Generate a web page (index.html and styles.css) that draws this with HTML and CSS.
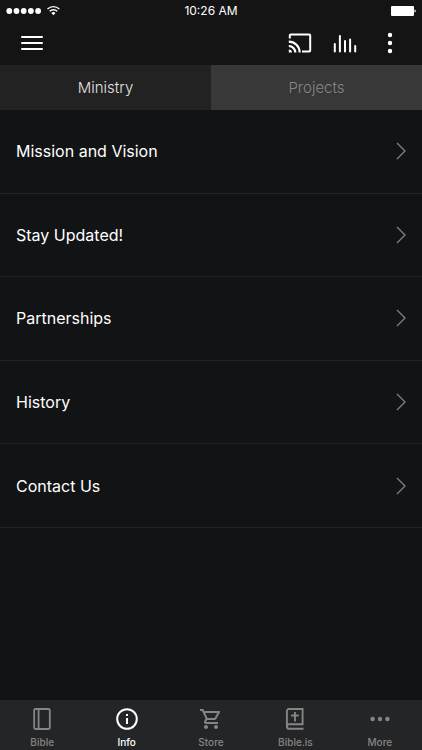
FILE: index.html
```html
<!DOCTYPE html>
<html lang="en">

<head>
    <title>Ministry</title>
    <meta charset="utf-8" />
    <meta name="viewport" content="width=device-width, initial-scale=1" />
    <link rel="stylesheet" href="styles.css">
</head>

<body>
    <!-- status bar -->
    <div class="status">
        <svg class="signal" width="54" height="12" viewBox="0 0 54 12" aria-hidden="true">
            <g fill="#fff">
                <circle cx="3.3" cy="6" r="2.9" />
                <circle cx="10.5" cy="6" r="2.9" />
                <circle cx="17.7" cy="6" r="2.9" />
                <circle cx="24.9" cy="6" r="2.9" />
                <circle cx="32.1" cy="6" r="2.9" />
                <path d="M47.4 10.2L45.3 8a3.1 3.1 0 0 1 4.2 0z" />
            </g>
            <g fill="none" stroke="#fff" stroke-width="1.4">
                <path d="M41.5 4a8.6 8.6 0 0 1 11.8 0" />
                <path d="M43.6 6.2a5.5 5.5 0 0 1 7.6 0" />
            </g>
        </svg>
        <span class="time">10:26 AM</span>
        <svg class="battery" width="26" height="12" viewBox="0 0 26 12" aria-hidden="true">
            <rect x="1" y="1" width="23" height="10" rx="1" fill="#fff" />
            <path d="M24.5 4.5q1.3.3 1.3 1.5t-1.3 1.5z" fill="#fff" />
        </svg>
    </div>

    <!-- toolbar -->
    <header class="toolbar">
        <button class="icon-btn menu-btn" type="button" aria-label="Menu">
            <svg width="24" height="24" viewBox="0 0 24 24" stroke="#fff" stroke-width="2" stroke-linecap="round">
                <path d="M2 6h20M2 12h20M2 18h20" />
            </svg>
        </button>
        <button class="icon-btn" type="button" aria-label="Cast">
            <svg width="24" height="24" viewBox="0 0 24 24" fill="#fff">
                <path d="M21.2 2.5H2.8c-1.1 0-2 .9-2 2v3h2v-3h18.4v15H14v2h7.2c1.1 0 2-.9 2-2v-15c0-1.1-.9-2-2-2z" />
                <path d="M.8 18.4v3.1H4a3.2 3.2 0 0 0-3.2-3.1zM.8 14v2.1a5.4 5.4 0 0 1 5.4 5.4h2.2A7.5 7.5 0 0 0 .8 14zM.8 9.6v2.1a9.8 9.8 0 0 1 9.8 9.8h2.1A11.9 11.9 0 0 0 .8 9.6z" />
            </svg>
        </button>
        <button class="icon-btn" type="button" aria-label="Now playing">
            <svg width="24" height="24" viewBox="0 0 24 24" stroke="#fff" stroke-width="2" stroke-linecap="round">
                <path d="M1.8 13v7.5M6.9 5v15.5M12 10v10.5M17.1 8.5v12M22.2 15v5.5" />
            </svg>
        </button>
        <button class="icon-btn" type="button" aria-label="Options">
            <svg width="24" height="24" viewBox="0 0 24 24" fill="#fff">
                <circle cx="12" cy="4" r="2.2" />
                <circle cx="12" cy="12" r="2.2" />
                <circle cx="12" cy="20" r="2.2" />
            </svg>
        </button>
    </header>

    <!-- tabs -->
    <div class="tabs">
        <button class="tab active" type="button">Ministry</button>
        <button class="tab" type="button">Projects</button>
    </div>

    <!-- list -->
    <main class="content">
        <ul class="list">
            <li><a class="row" href="#">Mission and Vision
                <svg class="chevron" width="10" height="18" viewBox="0 0 10 18"><path d="M1 1l8 8-8 8" /></svg></a></li>
            <li><a class="row" href="#">Stay Updated!
                <svg class="chevron" width="10" height="18" viewBox="0 0 10 18"><path d="M1 1l8 8-8 8" /></svg></a></li>
            <li><a class="row" href="#">Partnerships
                <svg class="chevron" width="10" height="18" viewBox="0 0 10 18"><path d="M1 1l8 8-8 8" /></svg></a></li>
            <li><a class="row" href="#">History
                <svg class="chevron" width="10" height="18" viewBox="0 0 10 18"><path d="M1 1l8 8-8 8" /></svg></a></li>
            <li><a class="row" href="#">Contact Us
                <svg class="chevron" width="10" height="18" viewBox="0 0 10 18"><path d="M1 1l8 8-8 8" /></svg></a></li>
        </ul>
    </main>

    <!-- bottom navigation -->
    <nav class="bottom-nav">
        <a class="nav-item" href="#">
            <svg width="24" height="24" viewBox="0 0 24 24" fill="none" stroke="currentColor" stroke-width="1.8">
                <rect x="4.2" y="2" width="15.6" height="20" rx="1.2" />
                <path d="M8.6 2v20" />
            </svg>
            <span>Bible</span>
        </a>
        <a class="nav-item current" href="#">
            <svg width="24" height="24" viewBox="0 0 24 24" fill="none" stroke="currentColor" stroke-width="2">
                <circle cx="12" cy="12" r="9.8" />
                <path d="M12 11v6M12 7v2" />
            </svg>
            <span>Info</span>
        </a>
        <a class="nav-item" href="#">
            <svg width="24" height="24" viewBox="0 0 24 24" fill="currentColor">
                <path d="M15.55 13c.75 0 1.41-.41 1.75-1.03l3.58-6.49A.996.996 0 0 0 20.01 4H5.21l-.94-2H1v2h2l3.6 7.59-1.35 2.44C4.52 15.37 5.48 17 7 17h12v-2H7l1.1-2h7.45zM6.16 6h12.15l-2.76 5H8.53L6.16 6zM7 18c-1.1 0-1.99.9-1.99 2S5.9 22 7 22s2-.9 2-2-.9-2-2-2zm10 0c-1.1 0-1.99.9-1.99 2s.89 2 1.99 2 2-.9 2-2-.9-2-2-2z" />
            </svg>
            <span>Store</span>
        </a>
        <a class="nav-item" href="#">
            <svg width="24" height="24" viewBox="0 0 24 24" fill="none" stroke="currentColor" stroke-width="1.9">
                <path d="M20.5 21.8H6.3a2.4 2.4 0 0 1-2.4-2.4V4A2 2 0 0 1 5.9 2h13.7v15.200H6.300a2.300 2.300 0 0 0-2.400 2.300" />
                <path d="M12 5v9.400M8.200 8.500h7.600" />
            </svg>
            <span>Bible.is</span>
        </a>
        <a class="nav-item" href="#">
            <svg width="24" height="24" viewBox="0 0 24 24" fill="currentColor">
                <circle cx="4.6" cy="12" r="2.2" />
                <circle cx="12" cy="12" r="2.2" />
                <circle cx="19.4" cy="12" r="2.2" />
            </svg>
            <span>More</span>
        </a>
    </nav>
</body>

</html>
```

FILE: styles.css
```css
* {
    box-sizing: border-box;
}

body {
    margin: 0;
    min-height: 100vh;
    display: flex;
    flex-direction: column;
    background-color: #121315;
    color: #fff;
    font-family: Inter, Roboto, "Liberation Sans", sans-serif;
}

a {
    color: inherit;
    text-decoration: none;
}

button {
    border: 0;
    padding: 0;
    background: none;
    color: inherit;
    font: inherit;
}

svg {
    display: block;
}

/* status bar */
.status {
    display: grid;
    grid-template-columns: 1fr auto 1fr;
    align-items: center;
    height: 21px;
    padding: 0 6px;
    background-color: #141414;
}

.time {
    font-size: 12px;
    line-height: 21px;
}

.battery {
    justify-self: end;
}

/* toolbar */
.toolbar {
    display: flex;
    align-items: center;
    gap: 21px;
    height: 44px;
    padding: 0 20px;
    background-color: #141414;
}

.menu-btn {
    margin-right: auto;
}

/* tabs */
.tabs {
    display: flex;
    height: 45px;
}

.tab {
    flex: 1;
    background-color: #383838;
    color: #858585;
    font-size: 15px;
    font-weight: 300;
}

.tab.active {
    background-color: #222;
    color: #e2e2e2;
}

/* list */
.content {
    flex: 1;
}

.list {
    display: grid;
    grid-auto-rows: 1fr;
    min-height: 418px;
    margin: 0;
    padding: 0;
    list-style: none;
}

.list li {
    display: flex;
    border-bottom: 1px solid #232426;
}

.row {
    flex: 1;
    display: flex;
    align-items: center;
    justify-content: space-between;
    padding: 0 16px;
    font-size: 16px;
    font-weight: 400;
}

.chevron {
    fill: none;
    stroke: #808183;
    stroke-width: 1.3;
}

/* bottom navigation */
.bottom-nav {
    display: flex;
    height: 50px;
    background-color: #242527;
}

.nav-item {
    flex: 1;
    display: flex;
    flex-direction: column;
    align-items: center;
    gap: 4px;
    padding-top: 7px;
    color: #858585;
    font-size: 10px;
    font-weight: 500;
    line-height: 14px;
}

.nav-item.current {
    color: #fff;
}
```
